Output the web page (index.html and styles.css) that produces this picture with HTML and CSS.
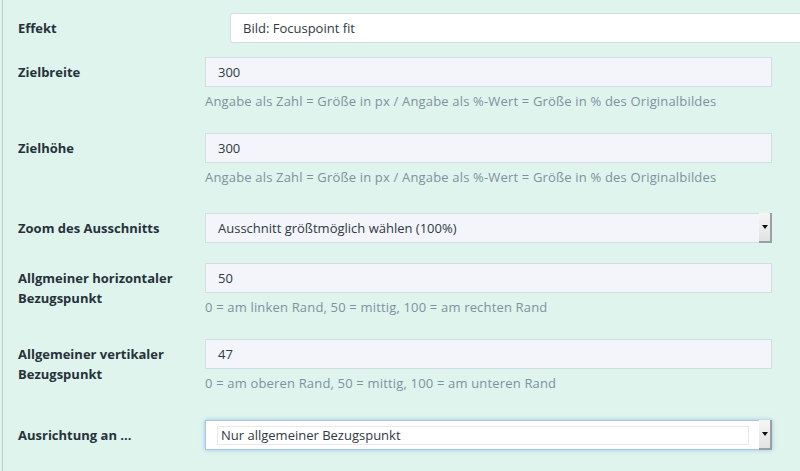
FILE: index.html
```html
<!DOCTYPE html>
<html lang="de">
<head>
<meta charset="utf-8">
<link rel="stylesheet" href="styles.css">
</head>
<body>
<div class="panel">
  <div class="row row-top">
    <div class="lbl">Effekt</div>
    <div class="ctl ctl-shift"><div class="field field-white">Bild: Focuspoint fit</div></div>
  </div>
  <div class="row row-help">
    <div class="lbl">Zielbreite</div>
    <div class="ctl">
      <div class="field">300</div>
      <div class="help">Angabe als Zahl = Größe in px / Angabe als %-Wert = Größe in % des Originalbildes</div>
    </div>
  </div>
  <div class="row row-help">
    <div class="lbl">Zielhöhe</div>
    <div class="ctl">
      <div class="field">300</div>
      <div class="help">Angabe als Zahl = Größe in px / Angabe als %-Wert = Größe in % des Originalbildes</div>
    </div>
  </div>
  <div class="row row-select">
    <div class="lbl">Zoom des Ausschnitts</div>
    <div class="ctl">
      <div class="field select"><span class="sel-text">Ausschnitt größtmöglich wählen (100%)</span><span class="arrow"></span></div>
    </div>
  </div>
  <div class="row row-help">
    <div class="lbl">Allgmeiner horizontaler Bezugspunkt</div>
    <div class="ctl">
      <div class="field">50</div>
      <div class="help">0 = am linken Rand, 50 = mittig, 100 = am rechten Rand</div>
    </div>
  </div>
  <div class="row row-help">
    <div class="lbl">Allgemeiner vertikaler Bezugspunkt</div>
    <div class="ctl">
      <div class="field">47</div>
      <div class="help">0 = am oberen Rand, 50 = mittig, 100 = am unteren Rand</div>
    </div>
  </div>
  <div class="row row-select row-last">
    <div class="lbl">Ausrichtung an ...</div>
    <div class="ctl">
      <div class="field select focused"><span class="inner">Nur allgemeiner Bezugspunkt</span><span class="arrow"></span></div>
    </div>
  </div>
</div>
</body>
</html>
```
FILE: styles.css
```css
html, body {
  margin: 0;
  padding: 0;
  width: 800px;
  height: 471px;
  overflow: hidden;
  background: #dff4ed;
}
body {
  font-family: "Open Sans", "DejaVu Sans", sans-serif;
  font-size: 13px;
  color: #2c3942;
}
.panel {
  margin-left: 2px;
  border-left: 1px solid #b3d2c5;
  height: 471px;
  padding: 13px 0 0 15px;
  box-sizing: border-box;
}
.row {
  display: flex;
  align-items: flex-start;
}
.row-top { padding-bottom: 14px; }
.row-help { padding-bottom: 23px; }
.row-select { padding-top: 4px; padding-bottom: 20px; }
.row-last { padding-top: 5px; }
.lbl {
  width: 187px;
  flex: none;
  font-weight: 700;
  line-height: 20px;
  padding-top: 5px;
  color: #26323a;
  padding-right: 30px;
  box-sizing: border-box;
}
.ctl {
  width: 567px;
  flex: none;
}
.ctl-shift {
  margin-left: 25px;
  width: 600px;
}
.field {
  height: 30px;
  box-sizing: border-box;
  border: 1px solid #d3dce0;
  background: #f3f5fa;
  padding: 0 12px;
  line-height: 28px;
  color: #2e3a44;
  display: flex;
  align-items: center;
}
.field-white {
  background: #fff;
  border-radius: 3px;
}
.help {
  margin-top: 5px;
  line-height: 18px;
  color: #7e929e;
  letter-spacing: 0.17px;
}
.select {
  position: relative;
  padding-right: 0;
}
.sel-text { flex: 1; }
.arrow {
  position: absolute;
  right: -1px;
  top: -1px;
  bottom: -1px;
  width: 13px;
  background: linear-gradient(#f6f6f6, #e2e2e2);
  border-right: 2px solid #9a9fa2;
  border-bottom: 2px solid #9a9fa2;
  box-sizing: border-box;
}
.arrow::after {
  content: "";
  position: absolute;
  left: 3px;
  top: 12px;
  border-left: 3px solid transparent;
  border-right: 3px solid transparent;
  border-top: 4px solid #111;
}
.focused {
  background: #fff;
  border-color: #a9c6e4;
  box-shadow: 0 0 4px rgba(90, 150, 220, 0.55);
  padding-left: 11px;
}
.inner {
  width: 532px;
  height: 19px;
  box-sizing: border-box;
  border: 1px solid #e6e8ea;
  line-height: 17px;
  padding-left: 3px;
  color: #2e3a44;
}
```
